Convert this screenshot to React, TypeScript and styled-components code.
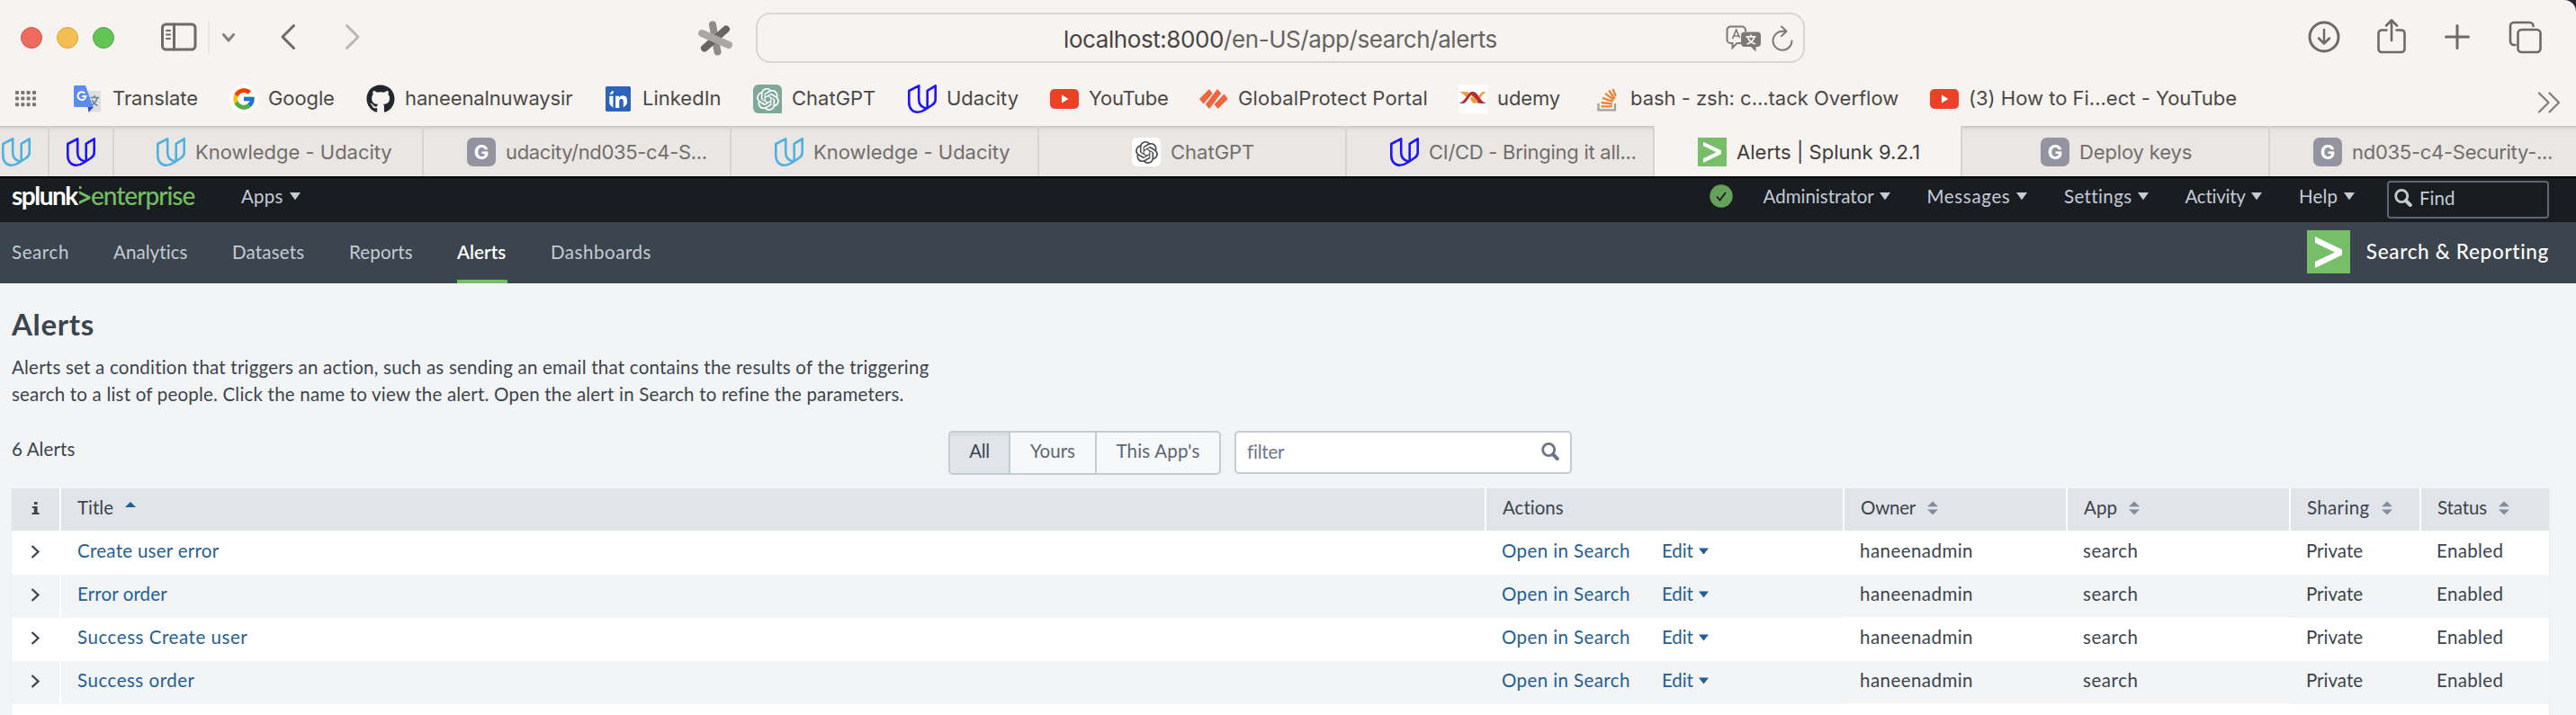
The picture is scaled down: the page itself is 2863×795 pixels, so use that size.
import React from 'react';
import styled, { createGlobalStyle, css } from 'styled-components';
import { FcGoogle } from 'react-icons/fc';
import { FaGithub, FaLinkedin } from 'react-icons/fa';
import { SiOpenai } from 'react-icons/si';

const GlobalStyle = createGlobalStyle`
  *, *::before, *::after { box-sizing: border-box; }
  html, body { margin: 0; padding: 0; height: 795px; overflow: hidden; background: #f2f4f5; }
`;

const splunkFont = css`
  font-family: Lato, 'Open Sans', sans-serif;
  font-weight: 400;
  font-size: 20.5px;
  line-height: 24px;
`;

const Page = styled.div`
  width: 2863px;
  height: 795px;
  overflow: hidden;
  display: flex;
  flex-direction: column;
  background: #2b2030;
`;

const Text = styled.span<{ $track?: number }>`
  white-space: nowrap;
  font-variant-ligatures: none;
  letter-spacing: ${(p) => p.$track ?? 0}px;
`;

/* ---------- Browser window ---------- */

const BrowserChrome = styled.header`
  flex: none;
  background: #f7f3f0;
  border-top-right-radius: 13px;
  font-family: Inter, sans-serif;
  font-size: 22px;
  color: #4b4846;
`;

const BrowserToolbar = styled.div`
  height: 84px;
  display: flex;
  align-items: center;
  padding-left: 23px;
`;

const TrafficLights = styled.div`
  display: flex;
  gap: 16px;
`;

const Light = styled.span<{ $fill: string; $edge: string }>`
  width: 24px;
  height: 24px;
  border-radius: 50%;
  background: ${(p) => p.$fill};
  border: 1px solid ${(p) => p.$edge};
`;

const ToolIcon = styled.svg<{ $gap: number; $lift?: number; $tone?: string }>`
  flex: none;
  margin-left: ${(p) => p.$gap}px;
  margin-bottom: ${(p) => p.$lift ?? 0}px;
  fill: none;
  stroke: ${(p) => p.$tone ?? '#6f6a67'};
  stroke-width: 3;
  stroke-linecap: round;
  stroke-linejoin: round;
`;

const ToolDivider = styled.span`
  width: 2px;
  height: 36px;
  margin-left: 12px;
  background: #e9e5e2;
`;

const AddressBar = styled.div`
  flex: none;
  width: 1166px;
  height: 56px;
  margin-left: 25px;
  border: 2px solid #dad6d2;
  border-radius: 16px;
  display: flex;
  align-items: center;
  padding: 2px 10px 0 340px;
  font-size: 26px;
  color: #666361;
`;

const Address = styled(Text)`
  flex: 1;
`;

const Host = styled.span`
  color: #474442;
`;

const BookmarkBar = styled.nav`
  height: 56px;
  display: flex;
  align-items: center;
  padding: 0 17px 4px;
`;

const BookmarkList = styled.div`
  flex: 1;
  display: flex;
  gap: 36px;
  margin-left: 42px;
`;

const Bookmark = styled.div`
  display: flex;
  align-items: center;
  gap: 11px;
`;

const BookmarkLabel = styled(Text)<{ $w: number }>`
  width: ${(p) => p.$w}px;
  padding-bottom: 2px;
`;

const SiteIcon = styled.span<{ $bg?: string; $round?: string; $color?: string }>`
  flex: none;
  width: 32px;
  height: 32px;
  display: flex;
  align-items: center;
  justify-content: center;
  background: ${(p) => p.$bg ?? 'transparent'};
  border-radius: ${(p) => p.$round ?? '0'};
  color: ${(p) => p.$color ?? '#fff'};
`;

const LinkedInPlate = styled.span`
  width: 28px;
  height: 28px;
  display: flex;
  align-items: center;
  justify-content: center;
  overflow: hidden;
  border-radius: 2px;
  background: radial-gradient(#fff 55%, #2c64bc 56%);
  color: #2c64bc;
`;

const TabStrip = styled.div`
  height: 56px;
  display: flex;
  overflow: hidden;
`;

const Tab = styled.div<{ $width: number; $inset: number; $active?: boolean }>`
  flex: none;
  width: ${(p) => p.$width}px;
  padding-left: ${(p) => p.$inset}px;
  display: flex;
  align-items: center;
  gap: 11px;
  padding-top: 2px;
  border-right: 2px solid #d8d4d1;
  color: ${(p) => (p.$active ? '#403d3b' : '#726e6b')};
  background: ${(p) => (p.$active ? '#f7f3f0' : 'linear-gradient(#c6c2bf 0, #d9d5d2 2px, #e5e1de 4px, #eae6e3 7px)')};
`;

const LetterIcon = styled(SiteIcon)`
  background: #9493a0;
  border-radius: 7px;
  font-size: 22px;
  font-weight: 700;
`;

/* ---------- Splunk bars ---------- */

const GlobalBar = styled.div`
  ${splunkFont}
  flex: none;
  height: 51px;
  border-top: 2px solid #050607;
  background: #191d21;
  color: #c3cbd4;
  display: flex;
  align-items: flex-start;
  padding: 0 30px 0 13px;
`;

const Logo = styled.div`
  display: flex;
  align-items: center;
  width: 255px;
  margin-top: 4px;
  font-size: 28px;
  line-height: 30px;
`;

const LogoName = styled(Text)`
  width: 75px;
  font-weight: 700;
  color: #fff;
`;

const LogoEdition = styled(Text)`
  font-weight: 500;
  color: #74bd63;
`;

const Menu = styled.div<{ $width: number }>`
  width: ${(p) => p.$width}px;
  height: 24px;
  margin-top: 8px;
  display: flex;
  align-items: center;
  justify-content: space-between;
`;

const UserMenus = styled.div`
  margin-left: auto;
  display: flex;
  align-items: flex-start;
  gap: 41px;
`;

const StatusIcon = styled.svg`
  margin: 7px -7px 0 0;
`;

const FindBox = styled.div`
  width: 180px;
  height: 42px;
  margin: 3px 0 0 -5px;
  padding: 0 6px 4px;
  border: 2px solid #5c6773;
  border-radius: 4px;
  display: flex;
  align-items: center;
  gap: 8px;
`;

const AppBar = styled.nav`
  ${splunkFont}
  flex: none;
  height: 68px;
  background: #3c444d;
  color: #c3cbd4;
  display: flex;
  align-items: center;
  gap: 48px;
  padding: 0 30px 0 13px;
`;

const AppTab = styled.div<{ $width: number; $active?: boolean }>`
  width: ${(p) => p.$width}px;
  height: 68px;
  padding-top: 21px;
  border-bottom: 4px solid ${(p) => (p.$active ? '#74bd63' : 'transparent')};
  color: ${(p) => (p.$active ? '#fff' : 'inherit')};
  font-weight: ${(p) => (p.$active ? 600 : 400)};
`;

const AppTitle = styled.div`
  margin-left: auto;
  display: flex;
  align-items: center;
  gap: 18px;
  padding-bottom: 2px;
  color: #fff;
  font-size: 22.5px;
  font-weight: 500;
`;

/* ---------- Alerts page ---------- */

const Main = styled.main`
  ${splunkFont}
  flex: 1;
  background: #f2f4f5;
  color: #3c444d;
  padding: 25px 30px 0 13px;
`;

const Title = styled.h1`
  margin: 0;
  font-size: 33px;
  line-height: 40px;
  font-weight: 700;
  letter-spacing: 0.7px;
`;

const Description = styled.p`
  margin: 14px 0 0;
  line-height: 29.5px;
  display: flex;
  flex-direction: column;
`;

const Controls = styled.div`
  height: 64px;
  margin-top: 26px;
  display: flex;
  align-items: flex-start;
`;

const Count = styled.div`
  width: 1041px;
  padding-top: 8px;
`;

const ButtonGroup = styled.div`
  display: flex;
  width: 303px;
  height: 49px;
  border: 2px solid #c3cbd4;
  border-radius: 5px;
  overflow: hidden;
`;

const FilterButton = styled.div<{ $width: number; $active?: boolean }>`
  width: ${(p) => p.$width}px;
  padding-top: 8px;
  text-align: center;
  color: ${(p) => (p.$active ? '#3c444d' : '#5c6773')};
  background: ${(p) => (p.$active ? 'linear-gradient(#d9dde4 3px, #e1e4e9 4px)' : '#f7f8fa')};
  & + & { border-left: 2px solid #c3cbd4; }
`;

const FilterInput = styled.div`
  width: 375px;
  height: 48px;
  margin-left: 15px;
  padding: 0 12px 3px;
  border: 2px solid #c3cbd4;
  border-radius: 5px;
  background: #fff;
  color: #6b7785;
  display: flex;
  align-items: center;
  justify-content: space-between;
`;

const columns = css`
  display: grid;
  grid-template-columns: 55px 1584px 398px 248px 248px 145px 142px;
`;

const Table = styled.section`
  width: 2820px;
  box-shadow: -1px 0 #eceef1, 1px 0 #eceef1;
`;

const HeadRow = styled.div`
  ${columns}
  height: 47px;
  background: #e1e4e9;
`;

const HeadCell = styled.div`
  display: flex;
  align-items: flex-start;
  gap: 13px;
  padding: 9px 0 0 18px;
  & + & { box-shadow: -2px 0 #fff; }
`;

const InfoHead = styled(HeadCell)`
  padding-left: 22px;
`;

const SortIcon = styled.svg`
  margin-top: 5px;
  fill: #818d99;
`;

const Row = styled.div`
  ${columns}
  height: 48px;
  background: #fff;
  color: #3c444d;
  &:nth-child(2) { height: 49px; border-top: 1px solid #fff; }
  &:nth-child(odd) { background: #f2f4f5; }
`;

const Cell = styled.div<{ $link?: boolean }>`
  padding: 9px 0 0 17px;
  color: ${(p) => (p.$link ? '#1f5f97' : 'inherit')};
  &:nth-child(2) { padding-left: 18px; }
  &:nth-child(4), &:nth-child(5) { border-bottom: 1px solid #fff; }
`;

const ExpandCell = styled.div`
  display: flex;
  align-items: flex-start;
  padding: 15px 0 0 21px;
  border-right: 2px solid #fff;
`;

const ActionsCell = styled(Cell)`
  display: flex;
  align-items: flex-start;
`;

const OpenLink = styled(Text)`
  width: 178px;
`;

const EditLink = styled.span`
  display: flex;
  align-items: center;
  gap: 6px;
`;

const Caret = ({ w = 12 }: { w?: number }) => (
  <svg width={w} height={w * 0.7} viewBox="0 0 12 8.4" fill="currentColor">
    <path d="M0 0H12L6 8.4Z" />
  </svg>
);

const LinkCaret = () => (
  <svg width="11" height="10" viewBox="0 0 11 10" fill="currentColor">
    <path d="M0 2.500h11L5.500 9.500z" />
  </svg>
);

const Sort = () => (
  <SortIcon width="12" height="16" viewBox="0 0 12 16">
    <path d="M0 6.3 6 .5l6 5.800z M0 9.500h12L6 15.300z" />
  </SortIcon>
);

const Magnifier = () => (
  <svg width="20" height="20" viewBox="0 0 20 20" fill="none" stroke="currentColor">
    <ellipse cx="8.200" cy="8" rx="6.500" ry="6.600" strokeWidth="2.800" />
    <path d="M12.800 13 17.800 18" strokeWidth="4" strokeLinecap="round" />
  </svg>
);

const UdacityIcon = ({ color }: { color: string }) => (
  <SiteIcon>
    <svg width="32" height="32" viewBox="0 0 32 32" fill="none" stroke={color} strokeWidth="2.600" strokeLinejoin="round">
      <path d="M12.200 1.300 1.300 7v13c0 6.500 4 10.700 9.500 10.700 3.500 0 6-1.200 9-3.200l7.500-5c2.400-1.600 3.400-3 3.400-6V1.300L21.700 6.800V25.500c0 .8-.5 1.200-1.400.9-4.800-1-8.100-4.500-8.100-9.900z" />
    </svg>
  </SiteIcon>
);

const SplunkIcon = ({ size }: { size: number }) => (
  <svg width={size} height={size} viewBox="0 0 48 48">
    <path fill="#76bf68" d="M0 0h48v48H0z" />
    <path fill="#fff" d="M9 7 39 21.500v6L9 42v-7l22-10.500L9 14z" />
  </svg>
);

const YouTubeIcon = () => (
  <SiteIcon>
    <svg width="32" height="22" viewBox="0 0 32 22">
      <rect width="32" height="22" rx="5" fill="#ec4126" />
      <path fill="#fff" d="M13 6.500 20.500 11 13 15.500z" />
    </svg>
  </SiteIcon>
);

const TranslateIcon = () => (
  <SiteIcon>
    <svg width="32" height="32" viewBox="0 0 32 32">
      <path fill="#dfdfdf" d="M13 7h16a1 1 0 0 1 1 1v21.500a1 1 0 0 1-1 1H17z" />
      <path fill="none" stroke="#6c8594" strokeWidth="1.600" d="M18.500 14.500h9.500M23 12v2.500M26 15c-1 4-3.500 6.500-6 8M20.500 17c1 3 3.500 5.500 6 6.500" />
      <path fill="#3d50c0" d="M15.500 25H22l-5.500 6z" />
      <path fill="#5a8cec" d="M1.500 1H13l8.500 24H1.500A1.500 1.500 0 0 1 0 23.500v-21A1.500 1.500 0 0 1 1.500 1z" />
      <path fill="none" stroke="#fff" strokeWidth="2" d="M12.300 9.800A4.400 4.400 0 1 0 13.300 13H9.200" />
    </svg>
  </SiteIcon>
);

const GlobalProtectIcon = () => (
  <SiteIcon>
    <svg width="32" height="22" viewBox="0 0 32 22" fill="#ed6640">
      <path d="M11 0 14.500 5 4.500 16.500 0 11z" />
      <path d="M20 0 24.300 4.800 11 22 6.800 17z" />
      <path d="M27.500 5.500 31.800 11 20.500 22 16.500 17z" />
    </svg>
  </SiteIcon>
);

const UdemyIcon = () => (
  <SiteIcon $bg="#fff">
    <svg width="32" height="20" viewBox="0 0 32 20" fill="none">
      <path fill="#eba13b" d="M1 2h7.500c1.500 0 2.500.8 3.500 2L9 8.500C7 6.500 5 4 1 2z" />
      <path fill="#b52c36" d="M1 15c5-2 7.500-7.500 11-11.500C13.200 2.200 14.500 2 16 2c1.800 0 3 .8 4 2l4.500 6c1.500 2 3.500 4 6.500 5h-7c-1.800 0-3-.8-4-2l-6-7.500L8.500 13c-1 1.300-2 2-3.500 2z" />
      <path fill="#eba13b" d="M13 10l3-4 3.500 4.500L25 3.500C26 2.400 27 2 28.500 2H31c-3.500 1.500-5.500 5-7.500 8-2 2.800-3.500 5-6 5-2 0-3.300-2.500-4.500-5z" />
      <path fill="#b52c36" d="M20 4l4.500 6-2.500 3.500-5-7z" />
    </svg>
  </SiteIcon>
);

const StackOverflowIcon = () => (
  <SiteIcon>
    <svg width="32" height="32" viewBox="0 0 32 32" fill="none">
      <path stroke="#9c9ea6" strokeWidth="2.200" d="M7.500 21v7.400h18.500V21" />
      <path stroke="#e8873a" strokeWidth="2.300" d="M10.500 24.300h12.500M10.700 20l12.400 1.700M12 14.800l11.600 4M15 9.800l9.700 7.200M19.200 6.300l6.500 9.700M23.500 5l3.400 8" />
    </svg>
  </SiteIcon>
);

const bookmarks: { label: string; w: number; track: number; icon: React.ReactNode }[] = [
  { label: 'Translate', w: 94, track: -0.08, icon: <TranslateIcon /> },
  { label: 'Google', w: 73, track: -0.1, icon: <SiteIcon $bg="#fff" $round="50%"><FcGoogle size={28} /></SiteIcon> },
  { label: 'haneenalnuwaysir', w: 185, track: -0.12, icon: <SiteIcon $color="#23272d"><FaGithub size={32} /></SiteIcon> },
  { label: 'LinkedIn', w: 87, track: 0, icon: <SiteIcon><LinkedInPlate><FaLinkedin size={32} /></LinkedInPlate></SiteIcon> },
  { label: 'ChatGPT', w: 93, track: 0, icon: <SiteIcon $bg="#7fa99b" $round="6px 6px 0 6px"><SiOpenai size={25} /></SiteIcon> },
  { label: 'Udacity', w: 79, track: 0, icon: <UdacityIcon color="#1d16f5" /> },
  { label: 'YouTube', w: 87, track: -0.25, icon: <YouTubeIcon /> },
  { label: 'GlobalProtect Portal', w: 209, track: 0.15, icon: <GlobalProtectIcon /> },
  { label: 'udemy', w: 69, track: -0.1, icon: <UdemyIcon /> },
  { label: 'bash - zsh: c...tack Overflow', w: 297, track: -0.03, icon: <StackOverflowIcon /> },
  { label: '(3) How to Fi...ect - YouTube', w: 297, track: 0, icon: <YouTubeIcon /> },
];

const letterG = <LetterIcon>G</LetterIcon>;
const skyUdacity = <UdacityIcon color="#4fb1e1" />;

const tabs: { label?: string; track?: number; width: number; inset: number; active?: boolean; icon: React.ReactNode }[] = [
  { width: 55, inset: 2, icon: skyUdacity },
  { width: 72, inset: 19, icon: <UdacityIcon color="#1d16f5" /> },
  { label: 'Knowledge - Udacity', track: -0.02, width: 344, inset: 47, icon: skyUdacity },
  { label: 'udacity/nd035-c4-S...', track: -0.34, width: 342, inset: 48, icon: letterG },
  { label: 'Knowledge - Udacity', track: -0.02, width: 342, inset: 48, icon: skyUdacity },
  { label: 'ChatGPT', track: 0, width: 342, inset: 103, icon: <SiteIcon $bg="#fff" $round="6px" $color="#4c4c4c"><SiOpenai size={25} /></SiteIcon> },
  { label: 'CI/CD - Bringing it all...', track: -0.28, width: 342, inset: 48, icon: <UdacityIcon color="#1d16f5" /> },
  { label: 'Alerts | Splunk 9.2.1', track: 0.03, width: 342, inset: 48, active: true, icon: <SplunkIcon size={32} /> },
  { label: 'Deploy keys', track: -0.15, width: 342, inset: 87, icon: letterG },
  { label: 'nd035-c4-Security-...', track: -0.28, width: 342, inset: 48, icon: letterG },
];

const userMenus = [
  { label: 'Administrator', width: 141, track: 0 },
  { label: 'Messages', width: 111.5, track: 0.65 },
  { label: 'Settings', width: 93.5, track: 0.38 },
  { label: 'Activity', width: 85.5, track: -0.25 },
  { label: 'Help', width: 62, track: 0.2 },
];

const appTabs = [
  { label: 'Search', width: 65, track: 0.6 },
  { label: 'Analytics', width: 84, track: 0.08 },
  { label: 'Datasets', width: 82, track: 0.18 },
  { label: 'Reports', width: 72, track: 0.15 },
  { label: 'Alerts', width: 56, track: 0.05, active: true },
  { label: 'Dashboards', width: 113, track: 0.55 },
];

const alerts = [
  { title: 'Create user error', track: 0.28 },
  { title: 'Error order', track: 0.12 },
  { title: 'Success Create user', track: 0.55 },
  { title: 'Success order', track: 0.52 },
];

export default function App() {
  return (
    <Page>
      <GlobalStyle />
      <BrowserChrome>
        <BrowserToolbar>
          <TrafficLights>
            <Light $fill="#ed6a5e" $edge="#d65549" />
            <Light $fill="#f4bf50" $edge="#d9a43b" />
            <Light $fill="#61c454" $edge="#4fa943" />
          </TrafficLights>
          <ToolIcon $gap={52} $lift={3} width="40" height="32" viewBox="0 0 40 32">
            <rect x="1.500" y="2" width="36.500" height="28" rx="4" />
            <path d="M14.500 2v28" />
            <path strokeWidth="2" d="M6 9h4M6 13.500h4M6 18h4" />
          </ToolIcon>
          <ToolDivider />
          <ToolIcon $gap={13} $tone="#85817e" width="16" height="12" viewBox="0 0 16 12">
            <path d="M2.500 2.500 8 9l5.500-6.500" />
          </ToolIcon>
          <ToolIcon $gap={49} $lift={2} width="18" height="30" viewBox="0 0 18 30">
            <path d="M15.500 2.500 3 15l12.500 12.500" />
          </ToolIcon>
          <ToolIcon $gap={54} $lift={2} $tone="#bab6b3" width="18" height="30" viewBox="0 0 18 30">
            <path d="M2.500 2.500 15 15 2.500 27.500" />
          </ToolIcon>
          <ToolIcon $gap={374} width="40" height="40" viewBox="0 0 40 40">
            <g strokeWidth="8">
              <path stroke="#8f8c8a" d="M17 5.500 22.500 35.500" />
              <path stroke="#696563" d="M32 10.500 8 31.500" />
              <path stroke="#aaa7a5" d="M5 15 35 28" />
            </g>
          </ToolIcon>
          <AddressBar>
            <Address $track={-0.42}><Host>localhost:8000</Host>/en-US/app/search/alerts</Address>
            <svg width="40" height="30" viewBox="0 0 40 30" fill="none" stroke="#7c7976" strokeWidth="2">
              <path d="M17 20h-4.500L7.500 25v-5H5.500a4 4 0 0 1-4-4V5.500a4 4 0 0 1 4-4H18a4 4 0 0 1 4 4V7" />
              <path d="M7.500 15 11.700 5l3.800 9M9 12h5.500" strokeWidth="1.600" />
              <path fill="#7c7976" stroke="none" d="M21 7.500h14a4 4 0 0 1 4 4V20a4 4 0 0 1-4 4h-1.500v5.500L28 24h-7a4 4 0 0 1-4-4v-8.500a4 4 0 0 1 4-4z" />
              <path stroke="#f7f3f0" strokeWidth="1.800" d="M22.500 12.800h11M28 10.500v2M32 13c-1.200 4-5 7-8.500 8M24.500 13c1 4 5 7 8.500 8" />
            </svg>
            <ToolIcon $gap={10} $tone="#7c7976" width="26" height="30" viewBox="0 0 26 30">
              <path strokeWidth="2" d="M16.500 6.800H13A10.500 10.500 0 1 0 23.500 17.500M12 1.500 17.500 6.800 12 12" />
            </ToolIcon>
          </AddressBar>
          <ToolIcon $gap={559} $lift={2} width="36" height="36" viewBox="0 0 36 36">
            <circle cx="18" cy="18" r="16" />
            <path strokeWidth="2.500" d="M18 10v15M12 19.500l6 6 6-6" />
          </ToolIcon>
          <ToolIcon $gap={40} $lift={5} width="34" height="40" viewBox="0 0 34 40">
            <path d="M11.500 13.500H6a3.500 3.500 0 0 0-3.500 3.500v17.500A3.500 3.500 0 0 0 6 38h22a3.500 3.500 0 0 0 3.500-3.500V17a3.500 3.500 0 0 0-3.500-3.500h-5.500M17 25V3M11 8.500l6-6 6 6" strokeWidth="2.600" />
          </ToolIcon>
          <ToolIcon $gap={40} $lift={3} width="32" height="32" viewBox="0 0 32 32">
            <path d="M16 3.500v25M3.500 16h25" />
          </ToolIcon>
          <ToolIcon $gap={41} $lift={2} width="38" height="38" viewBox="0 0 38 38">
            <rect x="10.500" y="11" width="25" height="25" rx="4" strokeWidth="2.600" />
            <path strokeWidth="2.600" d="M7.500 28H6a4 4 0 0 1-4-4V7a4 4 0 0 1 4-4h17.500a4 4 0 0 1 4 4" />
          </ToolIcon>
        </BrowserToolbar>

        <BookmarkBar>
          <svg width="23" height="18" viewBox="0 0 23 18" fill="#7a7673">
            {[0, 6.6, 13.2].map((y) => [0, 6.3, 12.6, 19].map((x) => (
              <rect key={`${x}-${y}`} x={x} y={y} width="4" height="4" rx="1" />
            )))}
          </svg>
          <BookmarkList>
            {bookmarks.map((b) => (
              <Bookmark key={b.label}>
                {b.icon}
                <BookmarkLabel $w={b.w} $track={b.track}>{b.label}</BookmarkLabel>
              </Bookmark>
            ))}
          </BookmarkList>
          <ToolIcon $gap={0} $lift={-7} $tone="#807c79" width="26" height="24" viewBox="0 0 26 24">
            <path strokeWidth="2.200" d="M2 1.500 12.500 12 2 22.500M13.500 1.500 24 12 13.500 22.500" />
          </ToolIcon>
        </BookmarkBar>

        <TabStrip>
          {tabs.map((t, i) => (
            <Tab key={i} $width={t.width} $inset={t.inset} $active={t.active}>
              {t.icon}
              {t.label && <Text $track={t.track}>{t.label}</Text>}
            </Tab>
          ))}
        </TabStrip>
      </BrowserChrome>

      <GlobalBar>
        <Logo>
          <LogoName $track={-1.5}>splunk</LogoName>
          <svg width="13" height="20" viewBox="0 0 13 20" fill="#74bd63">
            <path d="M0 5.200 12.500 11.500v2.600L0 20v-3.200l8.500-4L0 8.500zM0 0h2.500v3H0z" />
          </svg>
          <LogoEdition $track={-1}>enterprise</LogoEdition>
        </Logo>
        <Menu $width={66}><Text $track={0.25}>Apps</Text><Caret /></Menu>
        <UserMenus>
          <StatusIcon width="26" height="26" viewBox="0 0 26 26">
            <circle cx="13" cy="13" r="12.700" fill="#66a15b" />
            <path d="M8 13.500l3.500 4L18 9" fill="none" stroke="#191d21" strokeWidth="1.800" />
          </StatusIcon>
          {userMenus.map((m) => (
            <Menu key={m.label} $width={m.width}><Text $track={m.track}>{m.label}</Text><Caret /></Menu>
          ))}
          <FindBox><Magnifier /><Text>Find</Text></FindBox>
        </UserMenus>
      </GlobalBar>

      <AppBar>
        {appTabs.map((t) => (
          <AppTab key={t.label} $width={t.width} $active={t.active}><Text $track={t.track}>{t.label}</Text></AppTab>
        ))}
        <AppTitle>
          <SplunkIcon size={48} />
          <Text $track={0.68}>Search &amp; Reporting</Text>
        </AppTitle>
      </AppBar>

      <Main>
        <Title>Alerts</Title>
        <Description>
          <Text $track={0.22}>Alerts set a condition that triggers an action, such as sending an email that contains the results of the triggering</Text>
          <Text $track={0.2}>search to a list of people. Click the name to view the alert. Open the alert in Search to refine the parameters.</Text>
        </Description>
        <Controls>
          <Count><Text $track={0.1}>6 Alerts</Text></Count>
          <ButtonGroup>
            <FilterButton $width={65} $active><Text $track={-0.4}>All</Text></FilterButton>
            <FilterButton $width={96}><Text>Yours</Text></FilterButton>
            <FilterButton $width={138}><Text $track={0.2}>This App's</Text></FilterButton>
          </ButtonGroup>
          <FilterInput><Text $track={-0.2}>filter</Text><Magnifier /></FilterInput>
        </Controls>
        <Table>
          <HeadRow>
            <InfoHead>
              <svg width="9" height="24" viewBox="0 0 9 24" fill="#3c444d">
                <path d="M3 6h3.500v3H3zM.8 11h5.800v7H8.600v2H.5v-2h2.300v-5h-2z" />
              </svg>
            </InfoHead>
            <HeadCell>
              <Text>Title</Text>
              <svg width="12" height="14" viewBox="0 0 12 14" fill="#1f5f97"><path d="M0 12 6 6l6 6z" /></svg>
            </HeadCell>
            <HeadCell><Text>Actions</Text></HeadCell>
            <HeadCell><Text $track={-0.25}>Owner</Text><Sort /></HeadCell>
            <HeadCell><Text $track={0.1}>App</Text><Sort /></HeadCell>
            <HeadCell><Text $track={0.35}>Sharing</Text><Sort /></HeadCell>
            <HeadCell><Text $track={-0.1}>Status</Text><Sort /></HeadCell>
          </HeadRow>
          {alerts.map((a) => (
            <Row key={a.title}>
              <ExpandCell>
                <svg width="11" height="15" viewBox="0 0 11 15" fill="none" stroke="#3c444d" strokeWidth="2.300">
                  <path d="M1.500 1 8.500 7.500 1.500 14" />
                </svg>
              </ExpandCell>
              <Cell $link><Text $track={a.track}>{a.title}</Text></Cell>
              <ActionsCell $link>
                <OpenLink $track={0.4}>Open in Search</OpenLink>
                <EditLink><Text $track={-0.1}>Edit</Text><LinkCaret /></EditLink>
              </ActionsCell>
              <Cell><Text $track={0.45}>haneenadmin</Text></Cell>
              <Cell><Text $track={0.55}>search</Text></Cell>
              <Cell><Text $track={0}>Private</Text></Cell>
              <Cell><Text $track={0.35}>Enabled</Text></Cell>
            </Row>
          ))}
          <Row />
        </Table>
      </Main>
    </Page>
  );
}
